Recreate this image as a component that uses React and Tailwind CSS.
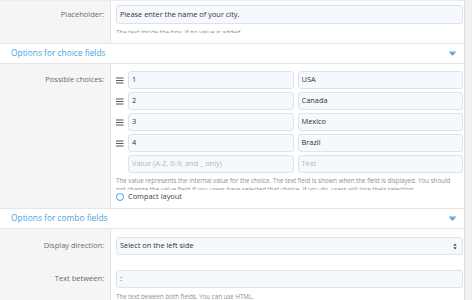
import React from "react";

const font = { fontFamily: '"Open Sans", "Noto Sans", sans-serif' };

function Input({ value, placeholder, className = "" }) {
  return (
    <div className={`h-[18px] min-w-0 rounded-[3px] border border-[#dde3ea] bg-[#f5f8fc] px-[3px] flex items-center text-[7.4px] ${value ? "text-[#333]" : "text-[#b5b9be]"} ${className}`}>
      <span className="truncate">{value || placeholder}</span>
    </div>
  );
}

function Section({ title }) {
  return (
    <div className="h-[20px] shrink-0 bg-white border-b border-[#e6e6e6] flex items-center justify-between pl-[11px] pr-[8px]">
      <span className="text-[8.4px] text-[#4aa3df]">{title}</span>
      <svg width="7" height="5" viewBox="0 0 7 5">
        <rect x="0" y="0" width="7" height="1" fill="#a9d0f0" />
        <path d="M0 1.2 H7 L3.5 4.8 Z" fill="#4a9fe0" />
      </svg>
    </div>
  );
}

function Burger() {
  return (
    <svg width="8" height="7" viewBox="0 0 8 7" className="shrink-0">
      <rect x="0" y="0.5" width="7.5" height="1" fill="#555" />
      <rect x="0" y="3" width="7.5" height="1" fill="#555" />
      <rect x="0" y="5.5" width="7.5" height="1" fill="#555" />
    </svg>
  );
}

const labelCol = "w-[111px] shrink-0 bg-[#f5f5f5] border-r border-[#e4e4e4] pr-[6px] text-[7.5px] text-[#6b6b6b]";
const labelLine = "h-[18px] flex items-center justify-end";
const help = "text-[6.2px] leading-[9px] text-[#8f8f8f]";

export default function App() {
  const choices = [
    ["1", "USA"],
    ["2", "Canada"],
    ["3", "Mexico"],
    ["4", "Brazil"],
  ];
  return (
    <div className="w-[472px] h-[300px] overflow-hidden flex bg-[#f1f1f1]" style={font}>
      <div className="w-[465px] shrink-0 border-r border-[#dcdcdc] flex flex-col border-t border-t-[#ececec]">
        {/* Placeholder row */}
        <div className="flex h-[43px] shrink-0 border-b border-[#e6e6e6]">
          <div className={`${labelCol} pt-[4px]`}>
            <div className={`${labelLine} h-[19px]`}>Placeholder:</div>
          </div>
          <div className="flex-1 min-w-0 bg-white pl-[5px] pr-[1px] pt-[4px]">
            <Input value="Please enter the name of your city." className="h-[19px]" />
            <div className={`mt-[4px] h-[5px] overflow-hidden ${help}`}>
              The text inside the box, if no value is added.
            </div>
          </div>
        </div>

        <Section title="Options for choice fields" />

        {/* Choices row */}
        <div className="flex h-[145px] shrink-0 border-b border-[#e6e6e6]">
          <div className={`${labelCol} pt-[7px]`}>
            <div className={labelLine}>Possible choices:</div>
          </div>
          <div className="flex-1 min-w-0 bg-white pl-[5px] pr-[1px] pt-[7px]">
            <div className="flex flex-col gap-[3px]">
              {choices.map(([v, t]) => (
                <div key={v} className="flex items-center">
                  <div className="w-[12px] shrink-0 flex items-center"><Burger /></div>
                  <div className="flex-1 min-w-0 flex gap-[4px]">
                    <Input value={v} className="flex-1" />
                    <Input value={t} className="flex-1" />
                  </div>
                </div>
              ))}
              <div className="flex items-center">
                <div className="w-[12px] shrink-0" />
                <div className="flex-1 min-w-0 flex gap-[4px]">
                  <Input placeholder="Value (A-Z, 0-9, and _ only)" className="flex-1" />
                  <Input placeholder="Text" className="flex-1" />
                </div>
              </div>
            </div>
            <div className={`mt-[3px] h-[14px] overflow-hidden whitespace-nowrap ${help}`}>
              The value represents the internal value for the choice. The text field is shown when the field is displayed. You should
              <br />
              not change the value field if you users have selected that choice. If you do, users will lose their selection.
            </div>
            <div className="flex items-center gap-[4px] h-[14px]">
              <span className="w-[8px] h-[8px] rounded-full border border-[#4aa3df] bg-white" />
              <span className="text-[7.4px] text-[#444]">Compact layout</span>
            </div>
          </div>
        </div>

        <Section title="Options for combo fields" />

        <div className="flex flex-1">
          <div className={`${labelCol} pt-[8px]`}>
            <div className={labelLine}>Display direction:</div>
            <div className={`${labelLine} mt-[15px]`}>Text between:</div>
          </div>
          <div className="flex-1 min-w-0 bg-white pl-[5px] pr-[1px] pt-[8px]">
            <div className="h-[18px] rounded-[3px] border border-[#dde3ea] bg-[#f5f8fc] pl-[3px] pr-[5px] flex items-center justify-between text-[7.4px] text-[#333]">
              <span>Select on the left side</span>
              <svg width="4" height="7" viewBox="0 0 4 7">
                <path d="M0.3 2.8 L2 0.4 L3.7 2.8 Z" fill="#444" />
                <path d="M0.3 4.2 L2 6.6 L3.7 4.2 Z" fill="#444" />
              </svg>
            </div>
            <div className="mt-[15px]">
              <Input value=":" />
            </div>
            <div className={`mt-[4px] ${help}`}>
              The text beween both fields. You can use HTML.
            </div>
          </div>
        </div>
      </div>
      <div className="flex-1 bg-[#f1f1f1]" />
    </div>
  );
}
